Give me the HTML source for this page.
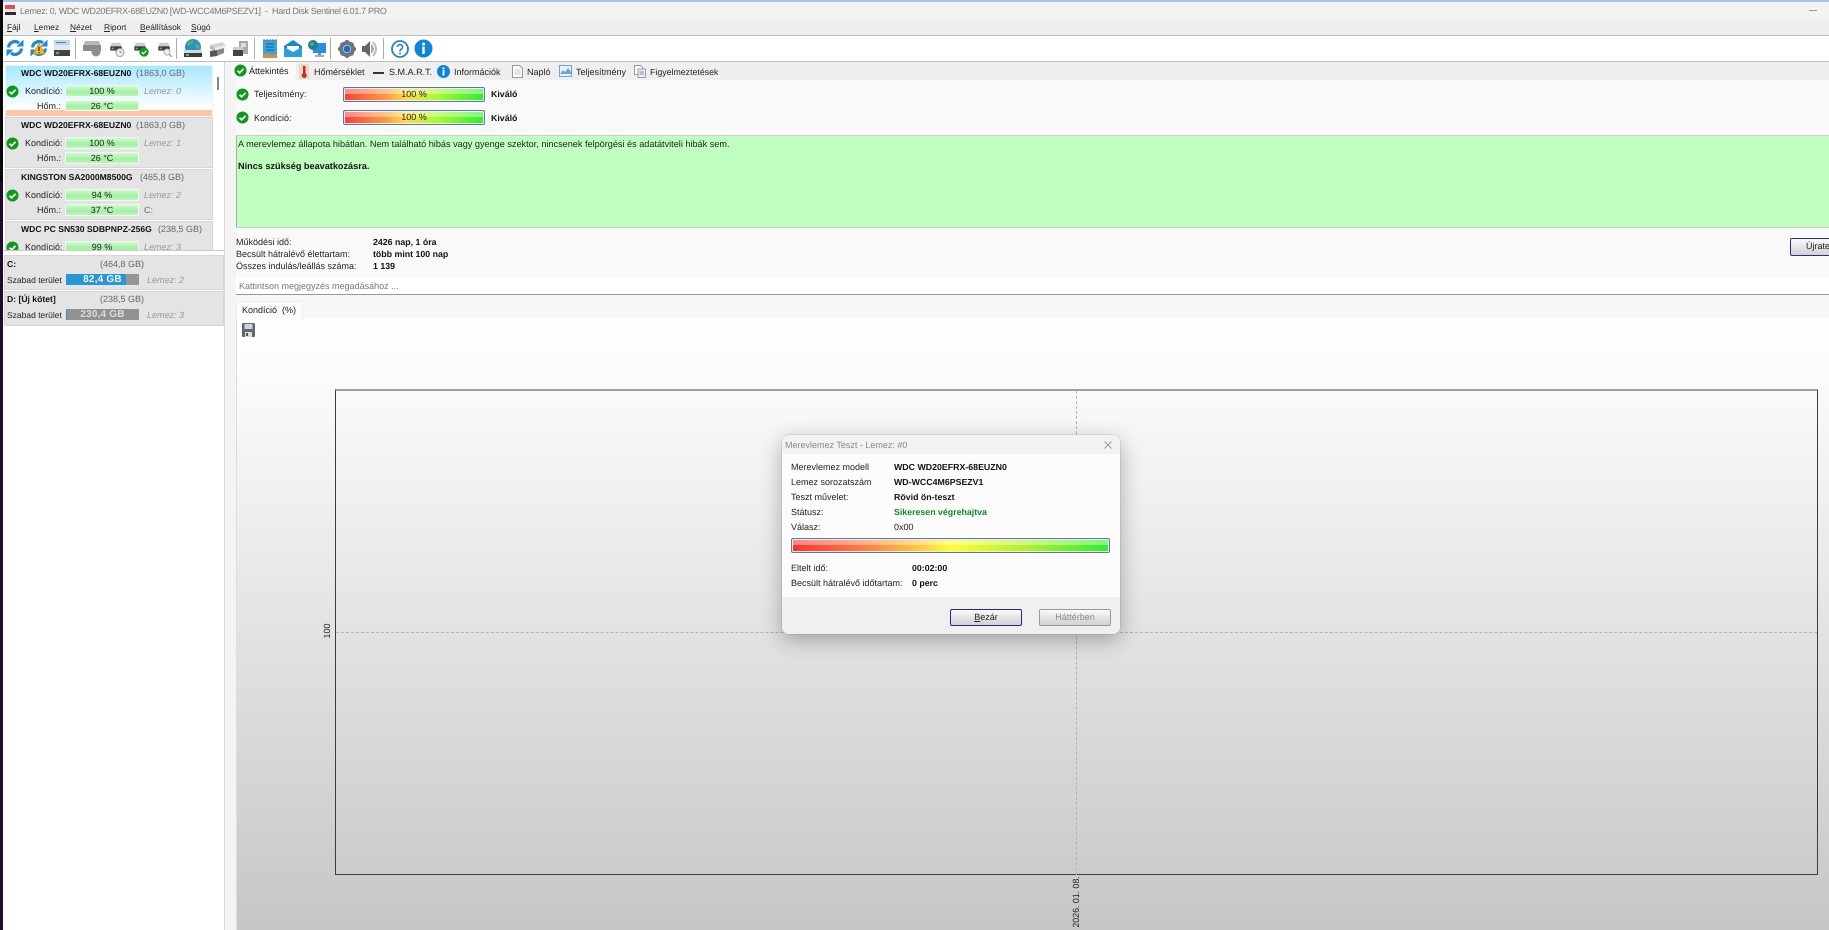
<!DOCTYPE html>
<html><head><meta charset="utf-8"><style>
html,body{margin:0;padding:0;background:#fff}
#p{position:relative;width:1829px;height:930px;overflow:hidden;font:9px/14px "Liberation Sans",sans-serif;text-rendering:geometricPrecision;color:#222;background:#fff;filter:blur(.35px)}
#p div,#p span,#p svg{position:absolute}
.t{white-space:pre;height:14px}
.b{font-weight:bold;color:#111;font-size:8.8px}
.h{font-weight:bold;color:#111;font-size:8.6px}
.i{font-style:italic;color:#999}
.g{color:#666}
.m{font-size:8.4px}
.s{font-size:8.5px}
.bar{background:linear-gradient(#d0fbd0,#b0f4b0 40%,#a2f0a2 60%,#bcf6bc);border:1px solid #f6f6f6;text-align:center;color:#222;line-height:11px}
.card{left:5px;width:206px;height:49px;background:#e4e4e4;border:1px solid #f6f6f6;outline:1px solid #d6d6d6;outline-offset:-1px}
.pb{background:linear-gradient(90deg,#ff3c3c,#ff9a40 30%,#ffe040 45%,#a8fa30 66%,#2cf02c);border:1px solid #5a7aa0;border-radius:2px;box-shadow:inset 0 0 0 1px #eee;text-align:center;line-height:13px;overflow:hidden}
.pb:after{content:"";position:absolute;left:1px;right:1px;top:1px;height:35%;background:rgba(255,255,255,.4)}
.btn{border:1px solid #888;border-radius:2px;background:linear-gradient(#fafafa,#e0e0e0 60%,#d2d2d2);text-align:center;line-height:15px}
</style></head><body><div id="p">
<svg width="0" height="0" style="left:0;top:0"><defs>
<symbol id="chk" viewBox="0 0 14 14"><circle cx="7" cy="7" r="6.5" fill="#0f9a1e"/><path d="M3.8 7.2l2.3 2.3 4.2-4.3" fill="none" stroke="#fff" stroke-width="1.8"/></symbol>
<symbol id="hdd" viewBox="0 0 18 14"><path d="M3 1h12l2 5H1z" fill="#cfcfcf"/><rect x="1" y="6" width="16" height="6" fill="#3d3d3d"/><rect x="3" y="8" width="3" height="2" fill="#4ad04a"/></symbol>
<symbol id="ref" viewBox="0 0 18 18"><path d="M2.500 8.500A6.500 6.500 0 0 1 13 4" fill="none" stroke="#1e8ad6" stroke-width="3.200"/><path d="M10.500 7.500h7v-7z" fill="#1e8ad6"/><path d="M15.500 9.500A6.500 6.500 0 0 1 5 14" fill="none" stroke="#1e8ad6" stroke-width="3.200"/><path d="M7.500 10.500h-7v7z" fill="#1e8ad6"/></symbol>
</defs></svg>

<!-- left strip -->
<div style="left:0;top:0;width:3px;height:182px;background:#0a0a0a"></div>
<div style="left:0;top:182px;width:3px;height:748px;background:#23082f"></div>
<!-- chrome -->
<div style="left:3px;top:0;right:0;height:2px;background:#a9c3e2"></div>
<div style="left:3px;top:2px;right:0;height:18px;background:#f3f3f3"></div>
<div style="left:3px;top:20px;right:0;height:15px;background:#efefef"></div>
<div style="left:3px;top:35px;right:0;height:1px;background:#bdbdbd"></div>
<div style="left:3px;top:61px;right:0;height:1px;background:#bdbdbd"></div>
<!-- title icon -->
<div style="left:5px;top:5px;width:10px;height:4px;background:#e05050"></div>
<div style="left:5px;top:9px;width:11px;height:3px;background:#e8e8e8"></div>
<div style="left:5px;top:12px;width:11px;height:3px;background:#2c2c2c"></div>
<span class="t" style="left:20px;top:4px;color:#777;letter-spacing:-.33px">Lemez: 0, WDC WD20EFRX-68EUZN0 [WD-WCC4M6PSEZV1]  -  Hard Disk Sentinel 6.01.7 PRO</span>
<div style="left:1809px;top:10px;width:8px;height:1px;background:#999"></div>
<!-- menu -->
<span class="t m" style="left:7px;top:20px"><u>F</u>ájl</span>
<span class="t m" style="left:34px;top:20px"><u>L</u>emez</span>
<span class="t m" style="left:70px;top:20px"><u>N</u>ézet</span>
<span class="t m" style="left:104px;top:20px"><u>R</u>iport</span>
<span class="t m" style="left:140px;top:20px"><u>B</u>eállítások</span>
<span class="t m" style="left:191px;top:20px"><u>S</u>úgó</span>
<!-- toolbar -->
<svg style="left:6px;top:39px" width="18" height="18"><use href="#ref" width="18" height="18"/></svg>
<svg style="left:30px;top:39px" width="18" height="18" viewBox="0 0 18 18"><use href="#ref" width="18" height="18"/><path d="M9 4l6 11H3z" fill="#f5b81e" stroke="#c88a10" stroke-width=".6"/><rect x="8.400" y="7.500" width="1.200" height="4.500" fill="#333"/><rect x="8.400" y="13" width="1.200" height="1.200" fill="#333"/></svg>
<svg style="left:54px;top:40px" width="16" height="17" viewBox="0 0 16 17"><rect x="0" y="0" width="16" height="5" fill="#bcd8f0"/><rect x="0" y="5" width="16" height="5" fill="#e8e8e8"/><rect x="0" y="10" width="16" height="6" fill="#444"/><rect x="2" y="12" width="3" height="2" fill="#4ad04a"/><rect x="2" y="2" width="10" height="1" fill="#3a8ad0"/></svg>
<div style="left:75px;top:38px;width:1px;height:21px;background:#aaa"></div>
<svg style="left:83px;top:40px" width="18" height="17" viewBox="0 0 18 17"><path d="M2 1h14l2 5H0z" fill="#b8b8b8"/><rect y="5" width="18" height="6" fill="#8a8a8a"/><circle cx="13" cy="12" r="4.500" fill="#8f8f8f"/></svg>
<svg style="left:107px;top:42px" width="18" height="15" viewBox="0 0 18 15"><use href="#hdd" width="18" height="10"/><circle cx="13" cy="10.500" r="4" fill="#f2f2f2" stroke="#999"/><path d="M13 8.500v2h1.800" stroke="#777" fill="none" stroke-width=".8"/></svg>
<svg style="left:131px;top:42px" width="18" height="15" viewBox="0 0 18 15"><use href="#hdd" width="18" height="10"/><use href="#chk" x="8" y="5" width="10" height="10"/></svg>
<svg style="left:155px;top:42px" width="18" height="15" viewBox="0 0 18 15"><use href="#hdd" width="18" height="10"/><circle cx="12" cy="10" r="3" fill="#e8f0ff" stroke="#a8b4c8"/><path d="M14 12l3 3" stroke="#a0a8b4" stroke-width="1.500"/></svg>
<div style="left:176px;top:38px;width:1px;height:21px;background:#aaa"></div>
<svg style="left:183px;top:39px" width="20" height="19" viewBox="0 0 20 19"><circle cx="10" cy="8" r="8" fill="#2a8fd0"/><path d="M4 5q3-4 7-3-1 3-4 3l-1 3zM12 5l4 1 1 4-4-1z" fill="#5cb84a"/><rect x="1" y="11" width="18" height="3" fill="#d8d8d8"/><rect x="1" y="14" width="18" height="4" fill="#3d3d3d"/><rect x="3" y="15" width="3" height="2" fill="#4ad04a"/></svg>
<svg style="left:208px;top:42px" width="18" height="15" viewBox="0 0 18 15"><path d="M2 3l12-3 4 3-11 3z" fill="#d4d4d4"/><path d="M2 3v4l5 2V6z" fill="#bbb"/><path d="M7 6l11-3v4L7 10z" fill="#eee"/><path d="M2 9l7-1v6l-7 1z" fill="#555"/><path d="M9 8l7-2v5l-7 3z" fill="#888"/></svg>
<svg style="left:232px;top:41px" width="18" height="16" viewBox="0 0 18 16"><rect x="7" y="0" width="9" height="13" fill="#aaa"/><rect x="9" y="2" width="5" height="4" fill="#ddd"/><rect x="1" y="8" width="10" height="7" fill="#444"/><rect x="1" y="6" width="10" height="3" fill="#ccc"/></svg>
<div style="left:254px;top:38px;width:1px;height:21px;background:#aaa"></div>
<svg style="left:263px;top:39px" width="14" height="19" viewBox="0 0 14 19"><rect y="1" width="14" height="16" fill="#39a3dc"/><rect y="15" width="14" height="4" fill="#d98b4a"/><path d="M3 5h8M3 8h8M3 11h8" stroke="#0d5f90" stroke-width="1"/><path d="M1 0v2M4 0v2M7 0v2M10 0v2M13 0v2" stroke="#666"/></svg>
<svg style="left:284px;top:40px" width="18" height="17" viewBox="0 0 18 17"><path d="M0 6L9 0l9 6v11H0z" fill="#1a86cf"/><path d="M3 6h12v4l-6 3-6-3z" fill="#fff"/><path d="M0 7l9 5 9-5v10H0z" fill="#2c9de0"/></svg>
<svg style="left:308px;top:40px" width="18" height="18" viewBox="0 0 18 18"><rect x="5" y="3" width="13" height="10" fill="#2c8de0"/><rect x="10" y="13" width="3" height="3" fill="#888"/><rect x="7" y="15" width="9" height="2" fill="#aaa"/><circle cx="5" cy="5" r="5" fill="#1f7f8f"/><path d="M2 3l3-1 1 3-3 1z" fill="#5cb84a"/></svg>
<div style="left:330px;top:38px;width:1px;height:21px;background:#aaa"></div>
<svg style="left:338px;top:40px" width="18" height="18" viewBox="0 0 18 18"><circle cx="9" cy="9" r="6" fill="none" stroke="#6b7280" stroke-width="4"/><path d="M9 0v3M9 15v3M0 9h3M15 9h3M3 3l2 2M13 13l2 2M15 3l-2 2M3 15l2-2" stroke="#6b7280" stroke-width="3"/><circle cx="9" cy="9" r="3.500" fill="#1a6fc4"/></svg>
<svg style="left:362px;top:40px" width="16" height="18" viewBox="0 0 16 18"><path d="M0 6h3l5-5v16l-5-5H0z" fill="#666"/><path d="M9 4q6 5 0 10" fill="#aaa"/><path d="M11 2q6 7 0 14" fill="none" stroke="#bbb" stroke-width="2"/></svg>
<div style="left:383px;top:38px;width:1px;height:21px;background:#aaa"></div>
<svg style="left:391px;top:40px" width="18" height="18" viewBox="0 0 18 18"><circle cx="9" cy="9" r="8" fill="#fff" stroke="#2a80d0" stroke-width="1.800"/><path d="M6.500 7a2.500 2.500 0 1 1 3.500 2.300Q9 10 9 11.500" fill="none" stroke="#2a80d0" stroke-width="1.600"/><circle cx="9" cy="13.500" r="1" fill="#2a80d0"/></svg>
<svg style="left:414px;top:39px" width="19" height="19" viewBox="0 0 19 19"><circle cx="9.500" cy="9.500" r="9" fill="#0f85d8"/><circle cx="9.500" cy="5" r="1.500" fill="#fff"/><rect x="8.300" y="7.500" width="2.400" height="7.500" fill="#fff"/></svg>

<!-- left panel -->
<div style="left:224px;top:62px;width:1px;height:868px;background:#d8d8d8"></div>
<div style="left:225px;top:62px;width:11px;height:868px;background:#f4f4f4"></div>
<div style="left:3px;top:250px;width:221px;height:1px;background:#ccc"></div>
<div style="left:217px;top:77px;width:2px;height:13px;background:#888"></div>

<!-- card 1 -->
<div class="card" style="top:65px;height:50px;background:linear-gradient(#a8e8ff,#fff 85%);overflow:hidden;outline:0;border-color:#e8f6fb"><div style="left:0;right:0;bottom:0;height:6px;background:#ffc6a6"></div></div>
<span class="t h" style="left:21px;top:66px">WDC WD20EFRX-68EUZN0</span><span class="t g" style="left:136px;top:66px">(1863,0 GB)</span>
<svg style="left:6px;top:85px" width="13" height="13"><use href="#chk" width="13" height="13"/></svg>
<span class="t" style="left:25px;top:84px">Kondíció:</span><div class="bar" style="left:65px;top:85px;width:72px;height:10px">100 %</div><span class="t i" style="left:144px;top:84px">Lemez: 0</span>
<span class="t" style="left:37px;top:99px">Hőm.:</span><div class="bar" style="left:65px;top:100px;width:72px;height:9px">26 °C</div>
<!-- card 2 -->
<div class="card" style="top:117px"></div>
<span class="t h" style="left:21px;top:118px">WDC WD20EFRX-68EUZN0</span><span class="t g" style="left:136px;top:118px">(1863,0 GB)</span>
<svg style="left:6px;top:137px" width="13" height="13"><use href="#chk" width="13" height="13"/></svg>
<span class="t" style="left:25px;top:136px">Kondíció:</span><div class="bar" style="left:65px;top:137px;width:72px;height:10px">100 %</div><span class="t i" style="left:144px;top:136px">Lemez: 1</span>
<span class="t" style="left:37px;top:151px">Hőm.:</span><div class="bar" style="left:65px;top:152px;width:72px;height:10px">26 °C</div>
<!-- card 3 -->
<div class="card" style="top:169px"></div>
<span class="t h" style="left:21px;top:170px">KINGSTON SA2000M8500G</span><span class="t g" style="left:140px;top:170px">(465,8 GB)</span>
<svg style="left:6px;top:189px" width="13" height="13"><use href="#chk" width="13" height="13"/></svg>
<span class="t" style="left:25px;top:188px">Kondíció:</span><div class="bar" style="left:65px;top:189px;width:72px;height:10px">94 %</div><span class="t i" style="left:144px;top:188px">Lemez: 2</span>
<span class="t" style="left:37px;top:203px">Hőm.:</span><div class="bar" style="left:65px;top:204px;width:72px;height:10px">37 °C</div><span class="t g" style="left:144px;top:203px">C:</span>
<!-- card 4 -->
<div style="left:5px;top:221px;width:208px;height:29px;overflow:hidden">
<div class="card" style="left:0;top:0"></div>
<span class="t h" style="left:16px;top:1px">WDC PC SN530 SDBPNPZ-256G</span><span class="t g" style="left:153px;top:1px">(238,5 GB)</span>
<svg style="left:1px;top:20px" width="13" height="13"><use href="#chk" width="13" height="13"/></svg>
<span class="t" style="left:20px;top:19px">Kondíció:</span><div class="bar" style="left:60px;top:20px;width:72px;height:10px">99 %</div><span class="t i" style="left:139px;top:19px">Lemez: 3</span>
</div>
<!-- volumes -->
<div class="card" style="left:4px;top:255px;width:218px;height:33px"></div>
<span class="t h" style="left:7px;top:257px">C:</span><span class="t g" style="left:100px;top:257px">(464,8 GB)</span>
<span class="t s" style="left:7px;top:273px">Szabad terület</span>
<div style="left:66px;top:274px;width:73px;height:11px;background:linear-gradient(90deg,#2a96d6 0,#2a96d6 60px,#969696 60px);color:#e8f4fc;text-align:center;line-height:12px;font-size:10px;font-weight:bold;letter-spacing:.2px">82,4 GB</div>
<span class="t i" style="left:147px;top:273px">Lemez: 2</span>
<div class="card" style="left:4px;top:291px;width:218px;height:33px"></div>
<span class="t h" style="left:7px;top:292px">D: [Új kötet]</span><span class="t g" style="left:100px;top:292px">(238,5 GB)</span>
<span class="t s" style="left:7px;top:308px">Szabad terület</span>
<div style="left:66px;top:309px;width:73px;height:11px;background:linear-gradient(90deg,#2a96d6 0,#2a96d6 1px,#919191 1px);color:#ddd;text-align:center;line-height:12px;font-size:10px;font-weight:bold;letter-spacing:.2px">230,4 GB</div>
<span class="t i" style="left:147px;top:308px">Lemez: 3</span>

<!-- top tabs -->
<div style="left:236px;top:62px;right:0;height:18px;background:#efefef"></div>
<div style="left:236px;top:80px;right:0;height:56px;background:#f9f9f9"></div>
<div style="left:232px;top:62px;width:64px;height:18px;background:#f9f9f9"></div>
<svg style="left:234px;top:64px" width="13" height="13"><use href="#chk" width="13" height="13"/></svg>
<span class="t" style="left:249px;top:64px">Áttekintés</span>
<svg style="left:298px;top:64px" width="12" height="15" viewBox="0 0 12 15"><rect x="1" y="0" width="10" height="15" fill="#e8d8c8"/><rect x="5" y="2" width="2.500" height="9" fill="#c03020"/><circle cx="6.200" cy="11.500" r="2.500" fill="#c03020"/></svg>
<span class="t" style="left:314px;top:65px">Hőmérséklet</span>
<div style="left:373px;top:72px;width:11px;height:2px;background:#333"></div>
<span class="t" style="left:389px;top:65px;letter-spacing:.02px">S.M.A.R.T.</span>
<svg style="left:437px;top:65px" width="13" height="13" viewBox="0 0 13 13"><circle cx="6.500" cy="6.500" r="6.500" fill="#0f85d8"/><circle cx="6.500" cy="3.300" r="1.100" fill="#fff"/><rect x="5.600" y="5" width="1.800" height="5.500" fill="#fff"/></svg>
<span class="t" style="left:454px;top:65px">Információk</span>
<svg style="left:512px;top:65px" width="11" height="13" viewBox="0 0 11 13"><path d="M.5.500h7l3 3v9H.5z" fill="#fff" stroke="#999"/><path d="M2.500 5h6M2.500 7h6M2.500 9h6" stroke="#bbb" stroke-width=".7"/></svg>
<span class="t" style="left:527px;top:65px">Napló</span>
<svg style="left:559px;top:65px" width="13" height="13" viewBox="0 0 13 13"><rect x=".5" y=".5" width="12" height="11" fill="#e8f2fc" stroke="#6fa4d8"/><path d="M1 9l3-4 2 2 3-4 3 4v2z" fill="#6fa4d8"/></svg>
<span class="t" style="left:576px;top:65px">Teljesítmény</span>
<svg style="left:634px;top:65px" width="12" height="13" viewBox="0 0 12 13"><path d="M.5.500h6l2 2v7H.5z" fill="#fff" stroke="#999"/><path d="M4 4h7.500v8.500H4z" fill="#e8eef6" stroke="#99a"/><path d="M5.500 7h4.500M5.500 9h4.500" stroke="#79a"/></svg>
<span class="t" style="left:650px;top:65px;font-size:8.8px">Figyelmeztetések</span>

<!-- status rows -->
<svg style="left:236px;top:88px" width="13" height="13"><use href="#chk" width="13" height="13"/></svg>
<span class="t" style="left:254px;top:87px">Teljesítmény:</span>
<div class="pb" style="left:343px;top:87px;width:140px;height:13px"><span style="left:0;right:0;top:0;color:#222;z-index:2">100 %</span></div>
<span class="t b" style="left:491px;top:87px">Kiváló</span>
<svg style="left:236px;top:111px" width="13" height="13"><use href="#chk" width="13" height="13"/></svg>
<span class="t" style="left:254px;top:111px">Kondíció:</span>
<div class="pb" style="left:343px;top:110px;width:140px;height:13px"><span style="left:0;right:0;top:0;color:#222;z-index:2">100 %</span></div>
<span class="t b" style="left:491px;top:111px">Kiváló</span>

<!-- green box -->
<div style="left:236px;top:135px;right:0;height:1px;background:#ccc"></div>
<div style="left:236px;top:136px;right:0;height:91px;background:#bfffbf;border-left:1px solid #aaa"></div>
<div style="left:236px;top:227px;right:0;height:1px;background:#ccc"></div>
<div style="left:236px;top:228px;right:0;height:50px;background:#f9f9f9"></div>
<span class="t" style="left:238px;top:137px;font-size:9.13px">A merevlemez állapota hibátlan. Nem található hibás vagy gyenge szektor, nincsenek felpörgési és adatátviteli hibák sem.</span>
<span class="t" style="left:238px;top:159px;font-size:9.13px;font-weight:bold;color:#111">Nincs szükség beavatkozásra.</span>

<span class="t" style="left:236px;top:235px">Működési idő:</span><span class="t b" style="left:373px;top:235px">2426 nap, 1 óra</span>
<span class="t" style="left:236px;top:247px">Becsült hátralévő élettartam:</span><span class="t b" style="left:373px;top:247px">több mint 100 nap</span>
<span class="t" style="left:236px;top:259px">Összes indulás/leállás száma:</span><span class="t b" style="left:373px;top:259px">1 139</span>
<div class="btn" style="left:1790px;top:238px;width:60px;height:16px;border:1px solid #2a2f8f;text-align:left;padding-left:15px">Újrateszt</div>

<div style="left:236px;top:279px;right:0;height:15px;background:#fff;border-bottom:1px solid #999"></div>
<span class="t" style="left:239px;top:279px;color:#777">Kattintson megjegyzés megadásához ...</span>

<!-- chart pane -->
<div style="left:236px;top:295px;right:0;height:23px;background:#f7f7f7"></div>
<div style="left:236px;top:318px;right:0;height:612px;background:linear-gradient(#fff,#fbfbfb 10%,#c6c6c6);border-left:1px solid #ddd"></div>
<div style="left:236px;top:301px;width:65px;height:18px;background:#fbfbfb;border:1px solid #eee;border-bottom:0"></div>
<span class="t" style="left:242px;top:303px">Kondíció  (%)</span>
<svg style="left:242px;top:323px" width="13" height="14" viewBox="0 0 13 14"><rect width="13" height="14" rx="1" fill="#666"/><rect x="2.500" y="1" width="8" height="5" fill="#c8d4e8"/><rect x="3" y="9" width="7" height="5" fill="#ddd"/><rect x="4" y="10" width="2" height="3" fill="#555"/></svg>

<div style="left:335px;top:389px;width:1481px;height:483px;border:1px solid #3c3c3c;border-top:2px solid #a0a0a0"></div>
<div style="left:1076px;top:391px;height:484px;width:0;border-left:1px dashed #b4b4b4"></div>
<div style="left:336px;top:632px;width:1481px;height:0;border-top:1px dashed #b4b4b4"></div>
<span class="t" style="left:319px;top:624px;width:16px;text-align:center;transform:rotate(-90deg);font-size:9px">100</span>
<span class="t" style="left:1048px;top:895px;width:56px;text-align:center;transform:rotate(-90deg);font-size:9px;letter-spacing:-.1px;color:#222">2026. 01. 08.</span>

<!-- dialog -->
<div style="left:782px;top:435px;width:338px;height:199px;background:#fff;border-radius:7px;box-shadow:0 6px 22px rgba(0,0,0,.3),0 0 1px rgba(0,0,0,.4);overflow:hidden">
<div style="left:0;top:0;right:0;height:19px;background:#f2f2f2"></div>
<div style="left:0;top:19px;right:0;height:143px;background:#fcfcfc"></div>
<div style="left:0;top:162px;right:0;height:37px;background:#f0f0f0"></div>
</div>
<span class="t" style="left:785px;top:438px;color:#888">Merevlemez Teszt - Lemez: #0</span>
<svg style="left:1104px;top:441px" width="8" height="8"><path d="M.5.500l7 7M7.500.500l-7 7" stroke="#999"/></svg>
<span class="t" style="left:791px;top:460px">Merevlemez modell</span><span class="t b" style="left:894px;top:460px">WDC WD20EFRX-68EUZN0</span>
<span class="t" style="left:791px;top:475px">Lemez sorozatszám</span><span class="t b" style="left:894px;top:475px">WD-WCC4M6PSEZV1</span>
<span class="t" style="left:791px;top:490px">Teszt művelet:</span><span class="t b" style="left:894px;top:490px">Rövid ön-teszt</span>
<span class="t" style="left:791px;top:505px">Státusz:</span><span class="t b" style="left:894px;top:505px;color:#0a8a2a">Sikeresen végrehajtva</span>
<span class="t" style="left:791px;top:520px">Válasz:</span><span class="t" style="left:894px;top:520px">0x00</span>
<div class="pb" style="left:791px;top:538px;width:317px;height:13px;background:linear-gradient(90deg,#ff3030,#ff7a40 22%,#ffd040 42%,#ffff30 50%,#b8f030 72%,#2cf02c)"></div>
<span class="t" style="left:791px;top:561px">Eltelt idő:</span><span class="t b" style="left:912px;top:561px">00:02:00</span>
<span class="t" style="left:791px;top:576px">Becsült hátralévő időtartam:</span><span class="t b" style="left:912px;top:576px">0 perc</span>
<div class="btn" style="left:950px;top:609px;width:70px;height:15px;border:1px solid #1e2a8a"><u>B</u>ezár</div>
<div class="btn" style="left:1039px;top:609px;width:70px;height:15px;color:#8a8a8a;border-color:#999">Háttérben</div>
</div></body></html>
